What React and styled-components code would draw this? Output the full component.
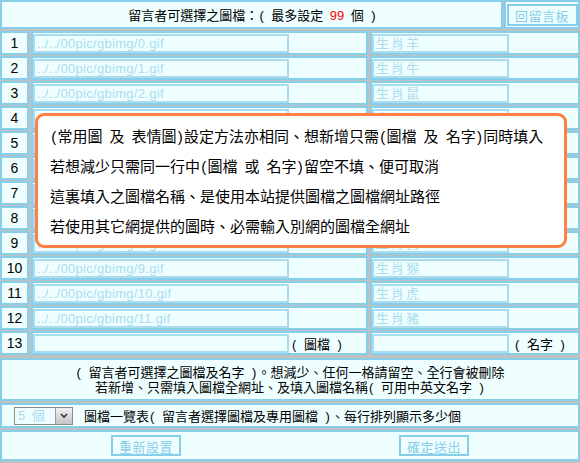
import React from 'react';
import styled, { createGlobalStyle } from 'styled-components';

const GlobalStyle = createGlobalStyle`
  html, body { margin: 0; padding: 0; background: #c0c0c0; }
  body {
    font-family: "Liberation Sans", "Noto Sans CJK TC", sans-serif;
    font-size: 13px;
    color: #000;
    word-spacing: 0.22em;
  }
  * { box-sizing: border-box; }
`;

const SKY = '#87ceeb';
const CELL = '#efffff';
const FAINT = '#a9dcf0';

const Page = styled.div`
  position: relative;
  width: 580px;
  height: 463px;
  display: flex;
  flex-direction: column;
  gap: 2px;
`;

const Cell = styled.div`
  background: ${CELL};
  border: 2px solid ${SKY};
  display: flex;
  align-items: center;
  justify-content: ${(p) => p.$justify || 'flex-start'};
  height: ${(p) => p.$h || 'auto'};
`;

const HeaderRow = styled.div`
  display: grid;
  grid-template-columns: 1fr 76px;
  gap: 1px;
`;

const Title = styled.span`
  font-size: 13px;
  padding-left: 2px;
`;

const Red = styled.span`
  color: #ff0000;
`;

/* half-width parenthesis, as wide as half a CJK glyph */
const P = styled.span`
  display: inline-block;
  width: 0.5em;
  text-align: center;
  word-spacing: 0;
`;

const SkyButton = styled.button`
  font-family: "Liberation Sans", "Noto Sans CJK TC", sans-serif;
  font-size: 13px;
  color: ${SKY};
  background: ${CELL};
  border: 2px solid ${SKY};
  width: ${(p) => p.$w || '71px'};
  height: ${(p) => p.$h || '22px'};
  padding: 0;
  letter-spacing: 0.5px;
`;

const Grid = styled.div`
  display: grid;
  grid-template-columns: 29px 337px 1fr;
  column-gap: 2px;
  row-gap: 1px;
`;

const Num = styled(Cell)`
  justify-content: center;
  height: 24px;
  font-size: 14px;
`;

const FieldCell = styled(Cell)`
  height: 24px;
  gap: ${(p) => p.$gap || '2px'};
`;

const Field = styled.div`
  width: ${(p) => p.$w};
  height: 19px;
  border: 2px solid ${FAINT};
  background: ${CELL};
  color: ${FAINT};
  font-size: 13px;
  line-height: 15px;
  padding-left: 2px;
  letter-spacing: ${(p) => p.$ls || '0.3px'};
  word-spacing: -1.5px;
  white-space: pre;
  overflow: hidden;
`;

const Label = styled.span`
  font-size: 13px;
  white-space: pre;
`;

const Notes = styled(Cell)`
  flex-direction: column;
  justify-content: center;
  align-items: center;
  height: 43px;
  margin-top: 1px;
  line-height: 15px;
`;

const SelectRow = styled(Cell)`
  height: 25px;
  padding-left: 12px;
  gap: 11px;
`;

const Select = styled.div`
  display: flex;
  width: 59px;
  height: 18px;
  border: 1px solid #8a8a8a;
  background: ${CELL};
`;

const SelectValue = styled.span`
  flex: 1;
  color: ${FAINT};
  font-size: 13px;
  line-height: 16px;
  padding-left: 3px;
`;

const SelectArrow = styled.span`
  width: 17px;
  border-left: 1px solid #9a9a9a;
  background: linear-gradient(#f0f0f0, #c4c4c4);
  display: flex;
  align-items: center;
  justify-content: center;
`;

const ButtonRow = styled.div`
  display: grid;
  grid-template-columns: 1fr 1fr;
  background: ${CELL};
  border: 2px solid ${SKY};
  height: 31px;
  align-items: center;
  justify-items: center;
`;

const ButtonSlot = styled.div`
  display: flex;
  justify-content: center;
  width: 100%;
`;

const Callout = styled.div`
  position: absolute;
  left: 35px;
  top: 113px;
  width: 532px;
  height: 135px;
  background: #ffffff;
  border: 3px solid #ff8040;
  border-radius: 9px;
  padding: 6px 0 0 12px;
  font-size: 15px;
  line-height: 30px;
`;

const CalloutLine = styled.div`
  white-space: pre;
`;

const names = ['羊', '牛', '鼠', '兔', '龍', '蛇', '馬', '雞', '狗', '猴', '虎', '豬'];

export default function App() {
  return (
    <>
      <GlobalStyle />
      <Page>
        <HeaderRow>
          <Cell $justify="center" $h="29px">
            <Title>
              留言者可選擇之圖檔：<P>(</P> 最多設定 <Red>99</Red> 個 <P>)</P>
            </Title>
          </Cell>
          <Cell $justify="center" $h="29px">
            <SkyButton $w="71px" $h="22px">回留言板</SkyButton>
          </Cell>
        </HeaderRow>
        <Grid>
          {names.map((n, i) => (
            <React.Fragment key={i}>
              <Num>{i + 1}</Num>
              <FieldCell>
                <Field $w="256px">{`../../00pic/gbimg/${i}.gif`}</Field>
              </FieldCell>
              <FieldCell>
                <Field $w="137px" $ls="0px">{`生 肖 ${n}`}</Field>
              </FieldCell>
            </React.Fragment>
          ))}
          <Num>13</Num>
          <FieldCell>
            <Field $w="256px" />
            <Label>
              <P>(</P> 圖檔 <P>)</P>
            </Label>
          </FieldCell>
          <FieldCell $gap="5px">
            <Field $w="137px" />
            <Label>
              <P>(</P> 名字 <P>)</P>
            </Label>
          </FieldCell>
        </Grid>
        <Notes>
          <div>
            <P>(</P> 留言者可選擇之圖檔及名字 <P>)</P>。想減少、任何一格請留空、全行會被刪除
          </div>
          <div>
            若新增、只需填入圖檔全網址、及填入圖檔名稱<P>(</P> 可用中英文名字 <P>)</P>
          </div>
        </Notes>
        <SelectRow>
          <Select>
            <SelectValue>5 個</SelectValue>
            <SelectArrow>
              <svg width="8" height="6" viewBox="0 0 8 6">
                <path d="M1 1 L4 4 L7 1" stroke="#333" strokeWidth="1.6" fill="none" />
              </svg>
            </SelectArrow>
          </Select>
          <span>
            圖檔一覽表<P>(</P> 留言者選擇圖檔及專用圖檔 <P>)</P>、每行排列顯示多少個
          </span>
        </SelectRow>
        <ButtonRow>
          <ButtonSlot>
            <SkyButton $w="70px" $h="21px">重新設置</SkyButton>
          </ButtonSlot>
          <ButtonSlot>
            <SkyButton $w="70px" $h="21px">確定送出</SkyButton>
          </ButtonSlot>
        </ButtonRow>
        <Callout>
          <CalloutLine>
            <P>(</P>常用圖 及 表情圖<P>)</P>設定方法亦相同、想新增只需<P>(</P>圖檔 及 名字<P>)</P>同時填入
          </CalloutLine>
          <CalloutLine>
            若想減少只需同一行中<P>(</P>圖檔 或 名字<P>)</P>留空不填、便可取消
          </CalloutLine>
          <CalloutLine>這裏填入之圖檔名稱、是使用本站提供圖檔之圖檔網址路徑</CalloutLine>
          <CalloutLine>若使用其它網提供的圖時、必需輸入別網的圖檔全網址</CalloutLine>
        </Callout>
      </Page>
    </>
  );
}
